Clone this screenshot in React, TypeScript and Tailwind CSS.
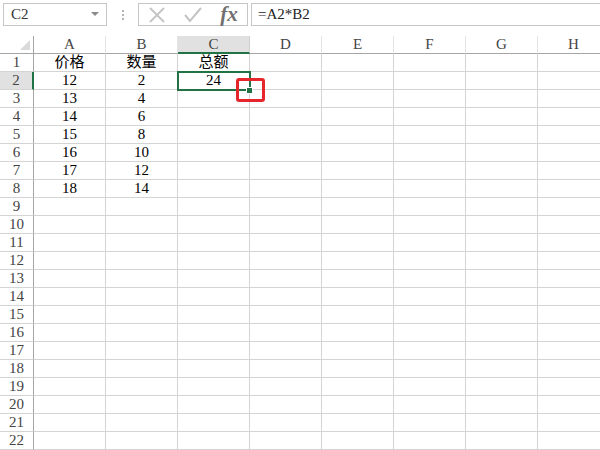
import { ReactNode } from 'react';

const COLS = ['A', 'B', 'C', 'D', 'E', 'F', 'G', 'H'];
const DATA: Record<number, string[]> = {
  1: ['价格', '数量', '总额'],
  2: ['12', '2', '24'],
  3: ['13', '4'],
  4: ['14', '6'],
  5: ['15', '8'],
  6: ['16', '10'],
  7: ['17', '12'],
  8: ['18', '14'],
};
const ROWS = Array.from({ length: 22 }, (_, i) => i + 1);

const font = 'font-["Liberation_Serif","Noto_Sans_CJK_SC",serif]';

function Cell({ children }: { children?: ReactNode }) {
  return (
    <div className="h-[18px] border-r border-b border-[#d4d4d4] flex items-center justify-center text-[15px] text-black leading-none">
      {children}
    </div>
  );
}

export default function App() {
  return (
    <div className={`w-[600px] h-[450px] overflow-hidden bg-white ${font}`}>
      {/* formula bar */}
      <div className="h-[36px] flex items-start pt-[3px] pl-[3px]">
        <div className="w-[104px] h-[23px] border border-[#c6c6c6] flex items-center justify-between pl-[7px] pr-[7px]">
          <span className="text-[15px] text-[#333]">C2</span>
          <svg width="8" height="5" viewBox="0 0 8 5"><path d="M0 0h8L4 4z" fill="#8a8a8a" /></svg>
        </div>
        <div className="w-[31px] h-[23px] flex flex-col items-center justify-center gap-[2px]">
          <span className="w-[2px] h-[2px] bg-[#b5b5b5]" />
          <span className="w-[2px] h-[2px] bg-[#b5b5b5]" />
          <span className="w-[2px] h-[2px] bg-[#b5b5b5]" />
        </div>
        <div className="w-[110px] h-[23px] border border-[#c6c6c6] flex items-center">
          <div className="w-[36px] flex justify-center">
            <svg width="18" height="16" viewBox="0 0 18 16"><path d="M2 1L16 15M16 1L2 15" stroke="#c4c4c4" strokeWidth="1.8" /></svg>
          </div>
          <div className="w-[36px] flex justify-center">
            <svg width="18" height="16" viewBox="0 0 18 16"><path d="M1 8L6 14L17 1" stroke="#c4c4c4" strokeWidth="2" fill="none" /></svg>
          </div>
          <div className="w-[36px] flex justify-center">
            <span className='font-["Liberation_Serif",serif] italic font-bold text-[21px] text-[#707070] leading-none'>fx</span>
          </div>
        </div>
        <div className="ml-[3px] flex-1 h-[23px] border-y border-l border-[#c6c6c6] flex items-center pl-[6px]">
          <span className="text-[15px] text-[#222]">=A2*B2</span>
        </div>
      </div>

      {/* sheet */}
      <div className="relative">
        <div className="grid grid-cols-[34px_repeat(8,72px)]">
          {/* corner */}
          <div className="h-[18px] border-r border-b border-[#a6a6a6] flex items-end justify-end pr-[3px] pb-[3px]">
            <svg width="10" height="10" viewBox="0 0 10 10"><path d="M10 0V10H0z" fill="#dadada" /></svg>
          </div>
          {COLS.map((c) => (
            <div
              key={c}
              className={`h-[18px] border-r flex items-center justify-center text-[15px] text-[#444] leading-none ${
                c === 'C' ? 'bg-[#e1e1e1] border-b-2 border-b-[#217346] border-r-[#cfcfcf]' : 'border-b border-b-[#a6a6a6] border-r-[#e4e4e4]'
              }`}
            >
              {c}
            </div>
          ))}
          {ROWS.map((r) => (
            <div key={r} className="contents">
              <div
                className={`h-[18px] border-b border-b-[#d4d4d4] flex items-center justify-center text-[15px] text-[#444] leading-none ${
                  r === 2 ? 'bg-[#e1e1e1] border-r-2 border-r-[#217346]' : 'border-r border-r-[#a6a6a6]'
                }`}
              >
                {r}
              </div>
              {COLS.map((c, i) => (
                <Cell key={c}>{DATA[r]?.[i]}</Cell>
              ))}
            </div>
          ))}
        </div>

        {/* selection on C2 */}
        <div className="absolute left-[177px] top-[35px] w-[74px] h-[20px] border-2 border-[#217346]" />
        <div className="absolute left-[246px] top-[51px] w-[7px] h-[7px] bg-[#217346] border border-white" />
        {/* red highlight */}
        <div className="absolute left-[236px] top-[42px] w-[29px] h-[24px] border-[3px] border-[#e5262b] rounded-[3px]" />
      </div>
    </div>
  );
}
